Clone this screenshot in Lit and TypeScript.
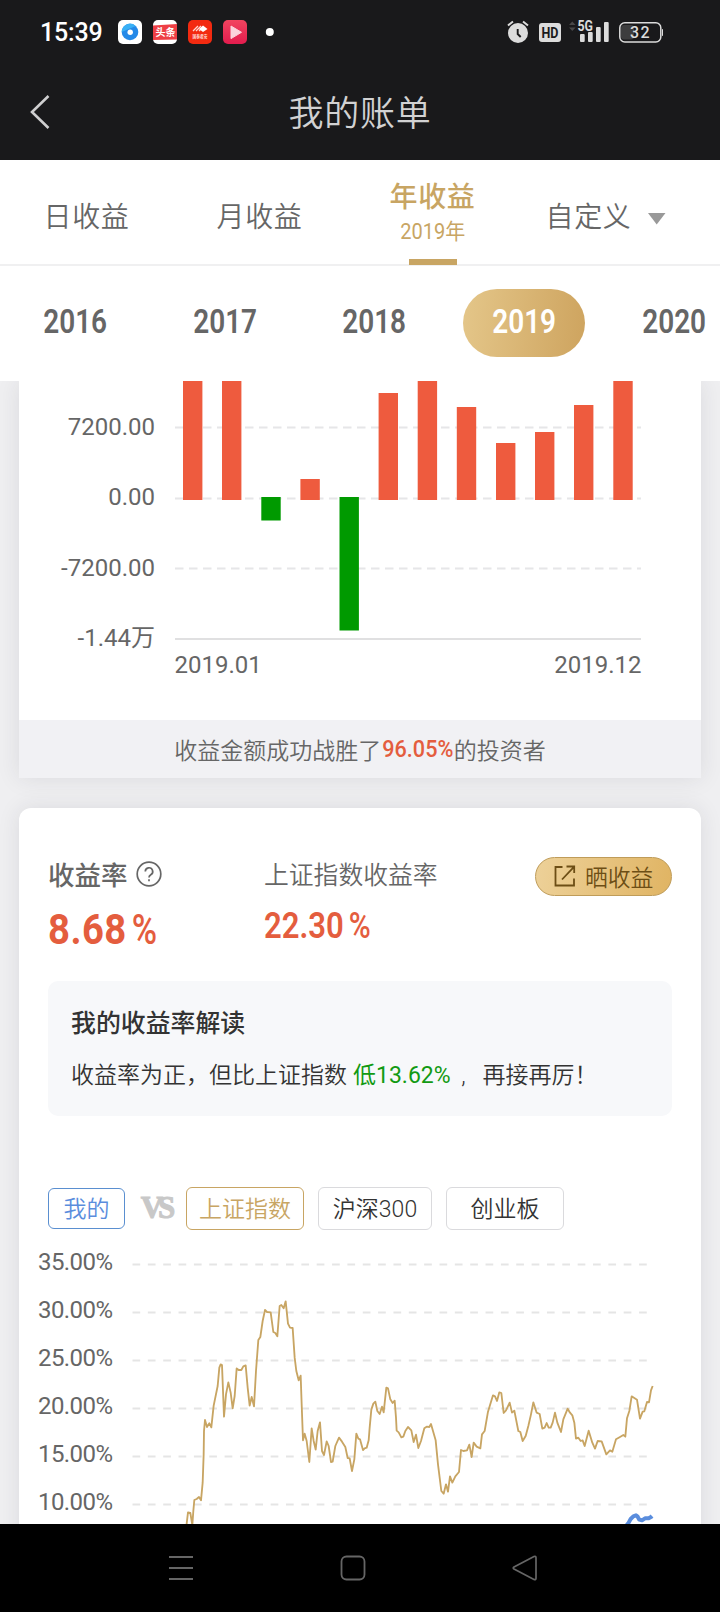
import { LitElement, html, svg, css } from "lit";
import { customElement, property } from "lit/decorators.js";
import { classMap } from "lit/directives/class-map.js";

const FONT = css`Roboto, "Noto Sans CJK SC", sans-serif`;

/** Monthly bars: [x, top, bottom] inside the plot, top edge of the view at 0. */
const MONTHS: Array<[number, number, number]> = [
  [183, -10, 119], [222, -10, 119], [261.3, 116, 139.5], [300.4, 98, 119],
  [339.5, 116, 249.5], [378.6, 12, 119], [417.7, -10, 119], [456.8, 26, 119],
  [496, 62, 119], [535, 51, 119], [574, 24, 119], [613.3, -10, 119],
];

/** Index curve samples, in thirds of a pixel. */
const INDEX_LINE =
  "558,1075 564,1024 571,1026 577,1062 580,1020 583,987 590,984 597,978 603,988 608,935 611,850 612,780 615,747 621,768 628,757 634,769 641,704 653,645 658,590 662,580 666,582 672,737 678,670 685,634 692,665 698,712 704,675 710,592 716,597 724,597 730,586 737,583 743,650 749,704 755,678 762,706 768,600 775,507 781,498 788,450 795,417 801,423 812,424 820,483 826,486 832,496 839,405 844,402 851,412 857,391 864,458 870,470 878,471 884,560 889,600 896,628 902,614 905,700 909,808 914,788 920,810 928,873 935,772 941,810 947,836 953,780 960,754 966,840 972,852 980,811 986,825 993,873 998,872 1006,825 1017,800 1026,812 1036,828 1043,861 1049,862 1056,900 1063,865 1069,788 1075,803 1080,805 1089,837 1094,832 1100,830 1106,808 1109,770 1114,716 1120,698 1126,692 1132,720 1139,729 1146,707 1151,724 1159,650 1164,652 1171,685 1178,696 1184,689 1188,740 1190,779 1196,784 1204,799 1210,797 1216,780 1224,768 1234,778 1241,813 1248,791 1255,831 1263,810 1273,772 1280,767 1288,768 1293,759 1299,780 1307,808 1314,880 1324,960 1331,968 1338,940 1344,962 1350,916 1357,935 1366,916 1377,903 1383,837 1390,840 1401,838 1408,821 1415,858 1421,815 1430,827 1441,832 1446,790 1454,780 1464,722 1479,673 1485,676 1491,690 1498,664 1504,666 1511,726 1518,718 1529,695 1536,725 1543,719 1555,780 1561,783 1568,810 1577,795 1585,765 1593,730 1600,694 1610,725 1619,729 1627,773 1634,770 1640,756 1646,770 1652,770 1658,755 1665,725 1672,755 1683,783 1690,745 1703,713 1710,725 1717,733 1723,755 1728,803 1735,800 1742,810 1748,808 1754,825 1766,779 1777,815 1785,833 1793,810 1805,811 1819,850 1830,838 1837,842 1848,805 1860,798 1870,792 1876,797 1881,742 1888,720 1895,676 1903,681 1911,686 1920,743 1928,722 1933,721 1941,693 1947,694 1953,658 1958,645";
const MINE_LINE =
  "1874,1070 1886,1055 1892,1044 1900,1036 1908,1033 1913,1037 1918,1046 1926,1048 1935,1042 1946,1042 1953,1038 1956,1035";

@customElement("status-bar")
class StatusBar extends LitElement {
  static styles = css`
    :host { display: flex; align-items: center; height: 64px; padding: 0 57px 0 40px; box-sizing: border-box; color: #fff; font-family: ${FONT}; }
    .time { width: 78px; font-size: 25px; font-weight: 500; letter-spacing: -0.200px; }
    .apps { display: flex; gap: 11px; align-items: center; }
    .right { margin-left: auto; display: block; }
    svg { display: block; }
    text { font-family: ${FONT}; }
  `;
  render() {
    return html`
      <div class="time">15:39</div>
      <div class="apps">
        <svg width="24" height="24"><rect width="24" height="24" rx="5" fill="#fff"/><circle cx="12" cy="12" r="8.3" fill="#2489e8"/><path d="M3.7 12a8.3 8.3 0 0 1 14-6z" fill="#39b0f5"/><circle cx="12.2" cy="12.2" r="2.7" fill="#fff"/></svg>
        <svg width="24" height="24"><rect width="24" height="24" rx="5" fill="#fff"/><path d="M0 5.5L24 4v15.5L0 20z" fill="#ee3f45"/><text x="2.5" y="16.3" font-size="10" font-weight="700" fill="#fff">头条</text></svg>
        <svg width="24" height="24"><rect width="24" height="24" rx="5" fill="#f32a10"/><path d="M5 11l5-5M8 11l5-5M11 11l4-4" stroke="#ffd9d2" stroke-width="1.3"/><path d="M11 9l4-3.5 4.5 3.5-4.500 3z" fill="#fff"/><text x="4.600" y="18" font-size="5" textLength="15" font-weight="700" fill="#ffd9d2" lengthAdjust="spacingAndGlyphs">国泰君安</text></svg>
        <svg width="24" height="24"><defs><linearGradient id="p" x2="0" y2="1"><stop stop-color="#f2445f"/><stop offset="1" stop-color="#e31c4e"/></linearGradient></defs><rect width="24" height="24" rx="5" fill="url(#p)"/><path d="M8 6l10.500 6.300L8 18.600z" fill="#fbd3dc" stroke="#fbd3dc" stroke-linejoin="round"/></svg>
      </div>
      <svg width="40" height="24"><circle cx="22.800" cy="12" r="4" fill="#fff"/></svg>
      <svg class="right" width="156" height="26" viewBox="507 19 156 26">
        <g fill="#dcdcdc">
          <circle cx="518" cy="33" r="10"/>
          <path d="M508 25.500l5-4M528 25.500l-5-4" stroke="#dcdcdc" stroke-width="2"/>
          <path d="M517.700 29v5l3 3" fill="none" stroke="#19191b" stroke-width="1.900"/>
          <rect x="539" y="23" width="22" height="19" rx="3"/>
          <text x="541.500" y="38" font-size="14.500" font-weight="700" fill="#19191b" textLength="17" lengthAdjust="spacingAndGlyphs">HD</text>
          <path d="M569 25l3.300-3.500 3.300 3.500zM569 27.500l3.300 3.500 3.300-3.500z" fill="#484849"/>
          <text x="577.500" y="31" font-size="14" font-weight="700" textLength="15.500" lengthAdjust="spacingAndGlyphs">5G</text>
          <rect x="580" y="34" width="4.700" height="8" rx="1"/><rect x="588" y="32" width="4.700" height="10" rx="1"/>
          <rect x="596" y="27" width="4.700" height="15" rx="1"/><rect x="604" y="22" width="4.700" height="20" rx="1"/>
          <rect x="621" y="25" width="13" height="14.500" rx="3" fill="#3d3d3e"/>
          <rect x="619.800" y="22.800" width="41" height="19.200" rx="5" fill="none" stroke="#dcdcdc" stroke-width="1.500"/>
          <rect x="662" y="29" width="1.600" height="7" rx=".8"/>
          <text x="630" y="38" font-size="16" font-weight="500" textLength="19.500">32</text>
        </g>
      </svg>`;
  }
}

@customElement("profit-chart")
class ProfitChart extends LitElement {
  static styles = css`
    :host { display: block; }
    svg { display: block; }
    text { font: 24px ${FONT}; fill: #666; }
    .grid { stroke: #e6e6e8; stroke-width: 2; stroke-dasharray: 8.5 5.500; }
    .axis { stroke: #e0e0e1; stroke-width: 2; }
    .end { text-anchor: end; }
    .up { fill: #ee5b3e; }
    .down { fill: #009a00; }
  `;
  render() {
    return html`<svg width="682" height="339" viewBox="19 0 682 339">
      ${[46.5, 117.5, 187.5].map((y) => svg`<line class="grid" x1="175" x2="641" y1=${y} y2=${y}/>`)}
      <line class="axis" x1="175" x2="641" y1="258" y2="258"/>
      ${MONTHS.map(([x, t, b]) => svg`<rect class=${t > 110 ? "down" : "up"} x=${x} y=${t} width="19.400" height=${b - t}/>`)}
      <text class="end" x="155" y="54">7200.00</text>
      <text class="end" x="155" y="124">0.00</text>
      <text class="end" x="155" y="195">-7200.00</text>
      <text class="end" x="155" y="265">-1.44万</text>
      <text x="174.500" y="292">2019.01</text>
      <text class="end" x="641.500" y="292">2019.12</text>
    </svg>`;
  }
}

@customElement("rate-chart")
class RateChart extends LitElement {
  static styles = css`
    :host { display: block; }
    svg { display: block; }
    text { font: 24px ${FONT}; fill: #666; text-anchor: end; }
    .grid { stroke: #e5e5e5; stroke-width: 2; stroke-dasharray: 7.700 7.650; }
    .index { fill: none; stroke: #c8a563; stroke-width: 5.500; stroke-linejoin: round; }
    .mine { fill: none; stroke: #5a8ddd; stroke-width: 12; stroke-linejoin: round; }
  `;
  render() {
    const ticks = ["35.00%", "30.00%", "25.00%", "20.00%", "15.00%", "10.00%"];
    return html`<svg width="682" height="294" viewBox="19 1230 682 294">
      ${ticks.map((t, i) => svg`
        <line class="grid" x1="132.500" x2="647" y1=${1263.5 + i * 48} y2=${1263.5 + i * 48}/>
        <text x="113" y=${1269 + i * 48} textLength="75">${t}</text>`)}
      <g transform="translate(0 1170) scale(.33333)">
        <polyline class="index" points=${INDEX_LINE}/>
        <polyline class="mine" points=${MINE_LINE}/>
      </g>
    </svg>`;
  }
}

@customElement("app-root")
class AppRoot extends LitElement {
  @property({ type: Number }) year = 2019;

  static styles = css`
    :host { display: flex; flex-direction: column; width: 720px; height: 1612px; overflow: hidden; background: #efeff1; color: #666; font-family: ${FONT}; }
    * { box-sizing: border-box; }
    svg { display: block; }
    .head { height: 160px; background: #19191b; flex: none; }
    .nav { display: grid; grid-template-columns: 80px 1fr 80px; align-items: center; height: 96px; }
    .back { margin-left: 28px; }
    .title { text-align: center; font-size: 35px; letter-spacing: 0.8px; color: #d2d2d3; font-weight: 350; padding-bottom: 4px; }
    .tabs { display: grid; grid-template-columns: repeat(4, 173px); height: 106px; flex: none; background: #fff; border-bottom: 2px solid #f0f0f1; font-size: 28px; letter-spacing: 0.7px; font-weight: 350; }
    .tab { display: flex; align-items: center; justify-content: center; padding-top: 4px; gap: 16px; }
    .caret { margin-top: 8px; }
    .tab.on { flex-direction: column; justify-content: flex-start; gap: 0; padding: 20px 0 0; color: #c8a563; font-weight: 500; }
    .on .name { line-height: 36px; }
    .sub { font-size: 22px; line-height: 30px; font-weight: 400; letter-spacing: 0; transform: scaleX(0.91); margin-top: 1px; }
    .mark { width: 48px; height: 6px; margin-top: 12px; background: #c8a563; }
    .years { display: flex; height: 115px; flex: none; padding: 23px 0 0 14px; background: #fff; }
    .year { flex: none; width: 122px; height: 68px; margin-right: 27.700px; border-radius: 34px; display: grid; place-items: center; padding-bottom: 2px; font-size: 32.500px; font-weight: 600; }
    .year.on { color: #fff; background: linear-gradient(95deg, #e4c689, #cea45f); }
    .year span { transform: scaleX(0.86); }
    .body { flex: 1; overflow: hidden; padding: 0 19px; }
    .card { background: #fff; box-shadow: 0 0 22px rgba(40, 40, 60, 0.1); }
    .beat { height: 58px; background: #f1f1f4; display: flex; align-items: center; justify-content: center; font-size: 23px; font-weight: 350; }
    .beat b { color: #e45d3e; font-weight: 500; transform: scaleX(0.94); margin: 0 -1.500px; }
    .rates { margin-top: 29.500px; border-radius: 12px 12px 0 0; height: 740px; }
    .top { display: grid; grid-template-columns: 216px 1fr auto; height: 173.500px; padding: 49px 29px 0; }
    .label { display: flex; align-items: center; height: 32px; font-size: 24.800px; font-weight: 350; }
    .label.main { height: 34px; font-size: 26.500px; gap: 8px; font-weight: 500; }
    .num { display: flex; align-items: baseline; color: #e45d3e; font-weight: 600; line-height: 1; white-space: nowrap; transform-origin: left; }
    .big { font-size: 42.500px; margin-top: 18.500px; letter-spacing: 0.5px; transform: scaleX(0.9); font-weight: 700; }
    .mid { font-size: 37px; margin-top: 18.500px; transform: scaleX(0.84); letter-spacing: 0; }
    .pct { font-weight: 500; margin-left: 6px; transform: scaleX(0.9); transform-origin: left; }
    .mid .pct { transform: scaleX(0.96); }
    .share { display: flex; align-items: center; width: 137px; height: 39px; padding-left: 18px; gap: 9px; border: 1px solid #bf9c59; border-radius: 20px; background: linear-gradient(100deg, #edd199, #e0b463); color: #6d4e15; font-size: 22.800px; font-weight: 350; }
    .note { margin: 0 29px; height: 135px; border-radius: 10px; background: #f7f8fa; padding: 25px 23px; color: #333; }
    .note-title { font-size: 24.900px; line-height: 36px; font-weight: 500; }
    .note-text { display: flex; font-size: 23px; line-height: 34px; margin-top: 17px; white-space: pre; font-weight: 350; }
    .low { color: #129a12; font-weight: 400; padding: 0 5px 0 6px; }
    .chips { display: flex; align-items: center; margin: 70px 0 0 29px; height: 45px; font-size: 23px; font-weight: 350; color: #333; }
    .chip { display: grid; place-items: center; height: 43px; width: 118px; padding-bottom: 3px; border: 1px solid #dadadd; border-radius: 6px; margin-right: 14px; }
    .chip.me { width: 77px; height: 41px; color: #5a8ddd; border-color: #5a8fd0; margin-right: 0; }
    .chip.idx { color: #c8a563; border-color: #c8a563; }
    .chip.slim { width: 114px; }
    .vs { width: 61px; text-align: center; font: 700 31px "Liberation Serif", serif; letter-spacing: -5px; color: #c8c8c8; -webkit-text-stroke: 1px #c8c8c8; padding-bottom: 2px; }
    .keys { height: 88px; flex: none; background: #000; display: flex; justify-content: center; align-items: center; gap: 144px; padding-right: 15px; }
  `;

  render() {
    return html`
      <div class="head">
        <status-bar></status-bar>
        <div class="nav">
          <svg class="back" width="24" height="36" fill="none" stroke="#cfcfd0" stroke-width="2.600"><path d="M20.500 2L4 18l16.500 16"/></svg>
          <div class="title">我的账单</div>
        </div>
      </div>
      <div class="tabs">
        <div class="tab">日收益</div>
        <div class="tab">月收益</div>
        <div class="tab on"><div class="name">年收益</div><div class="sub">${this.year}年</div><div class="mark"></div></div>
        <div class="tab">自定义<svg class="caret" width="18" height="12"><path d="M0 0h17.500L8.700 11.500z" fill="#999"/></svg></div>
      </div>
      <div class="years">
        ${[2016, 2017, 2018, 2019, 2020].map((y) => html`<div class=${classMap({ year: true, on: y === this.year })}><span>${y}</span></div>`)}
      </div>
      <div class="body">
        <div class="card">
          <profit-chart></profit-chart>
          <div class="beat">收益金额成功战胜了<b>96.05%</b>的投资者</div>
        </div>
        <div class="card rates">
          <div class="top">
            <div>
              <div class="label main">收益率
                <svg width="26" height="26" fill="none" stroke="#666" stroke-width="1.700"><circle cx="13" cy="13" r="11.800"/><path d="M9.300 10.500a3.700 3.700 0 1 1 5.500 3.200c-1.300.8-1.800 1.300-1.800 2.800"/><path d="M13 18.200v2"/></svg>
              </div>
              <div class="num big">8.68<span class="pct">%</span></div>
            </div>
            <div>
              <div class="label">上证指数收益率</div>
              <div class="num mid">22.30<span class="pct">%</span></div>
            </div>
            <div class="share">
              <svg width="22" height="22" fill="none" stroke="#6d4e15" stroke-width="1.800"><path d="M8.500 2H1.500v18.500h18.500V13.500M12.500 1.500h7.700V8M20 1.800L8 14.500"/></svg>
              晒收益
            </div>
          </div>
          <div class="note">
            <div class="note-title">我的收益率解读</div>
            <div class="note-text"><span>收益率为正，但比上证指数</span><span class="low">低13.62%</span><span> ,   再接再厉！</span></div>
          </div>
          <div class="chips">
            <div class="chip me">我的</div>
            <div class="vs">VS</div>
            <div class="chip idx">上证指数</div>
            <div class="chip slim">沪深300</div>
            <div class="chip">创业板</div>
          </div>
          <rate-chart></rate-chart>
        </div>
      </div>
      <div class="keys">
        <svg width="28" height="28" stroke="#666" stroke-width="2"><path d="M2 3h24M2 14h24M2 25h24"/></svg>
        <svg width="28" height="28" fill="none" stroke="#666" stroke-width="1.800"><rect x="2.500" y="2.500" width="23" height="23" rx="5"/></svg>
        <svg width="28" height="28" fill="none" stroke="#666" stroke-width="1.700" stroke-linejoin="round"><path d="M3 13l20-10.500q2-.7 2 1.300v20.400q0 2-2 1.200L3 15q-1.500-1 0-2z"/></svg>
      </div>`;
  }
}
